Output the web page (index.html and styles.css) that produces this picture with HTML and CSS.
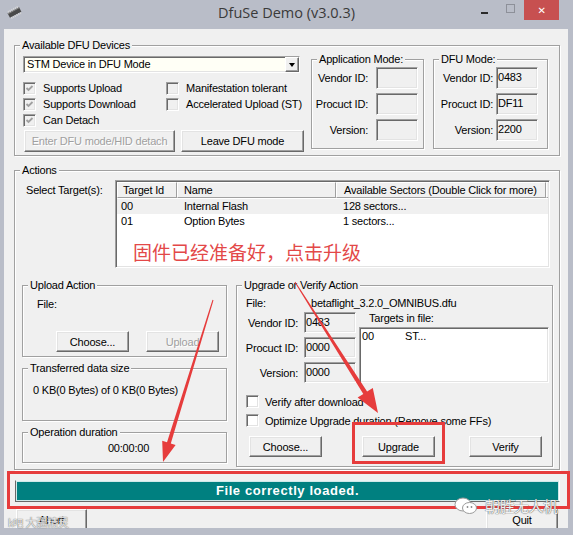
FILE: index.html
```html
<!DOCTYPE html>
<html>
<head>
<meta charset="utf-8">
<title>DfuSe Demo</title>
<link rel="stylesheet" href="styles.css">
</head>
<body>
<div class="window">
  <div class="titlebar">
    <div class="tb-left">
      <svg class="appicon" width="17" height="13" viewBox="0 0 17 13">
        <g transform="rotate(-28 8.5 6.5)">
          <rect x="2" y="4" width="13" height="5" fill="#4a4a4a"/>
          <rect x="2" y="4" width="13" height="1" fill="#8a8a8a"/>
          <g stroke="#d8d8d8" stroke-width="1">
            <line x1="3.5" y1="2" x2="3.5" y2="4"/><line x1="5.5" y1="2" x2="5.5" y2="4"/><line x1="7.5" y1="2" x2="7.5" y2="4"/><line x1="9.5" y1="2" x2="9.5" y2="4"/><line x1="11.5" y1="2" x2="11.5" y2="4"/><line x1="13.5" y1="2" x2="13.5" y2="4"/>
            <line x1="3.5" y1="9" x2="3.5" y2="11"/><line x1="5.5" y1="9" x2="5.5" y2="11"/><line x1="7.5" y1="9" x2="7.5" y2="11"/><line x1="9.5" y1="9" x2="9.5" y2="11"/><line x1="11.5" y1="9" x2="11.5" y2="11"/><line x1="13.5" y1="9" x2="13.5" y2="11"/>
          </g>
        </g>
      </svg>
    </div>
    <div class="title">DfuSe Demo (v3.0.3)</div>
    <div class="caps">
      <span class="cap-min"></span>
      <span class="cap-max"></span>
      <span class="cap-close">✕</span>
    </div>
  </div>

  <div class="client">
    <div class="group g-dev">
      <div class="gtitle">Available DFU Devices</div>
      <div class="dev-body">
        <div class="devleft">
          <div class="combo">
            <div class="combo-text">STM Device in DFU Mode</div>
            <div class="combo-btn"><span class="tri"></span></div>
          </div>
          <div class="checks">
            <div class="cb"><span class="box dis"><svg width="11" height="11" viewBox="0 0 11 11"><path d="M2.5 5 L4.5 7 L8.5 3" fill="none" stroke="#a0a0a0" stroke-width="1.8"/></svg></span>Supports Upload</div>
            <div class="cb"><span class="box dis"></span>Manifestation tolerant</div>
            <div class="cb"><span class="box dis"><svg width="11" height="11" viewBox="0 0 11 11"><path d="M2.5 5 L4.5 7 L8.5 3" fill="none" stroke="#a0a0a0" stroke-width="1.8"/></svg></span>Supports Download</div>
            <div class="cb"><span class="box dis"></span>Accelerated Upload (ST)</div>
            <div class="cb"><span class="box dis"><svg width="11" height="11" viewBox="0 0 11 11"><path d="M2.5 5 L4.5 7 L8.5 3" fill="none" stroke="#a0a0a0" stroke-width="1.8"/></svg></span>Can Detach</div>
          </div>
          <div class="devbtns">
            <div class="btn dis b-enter">Enter DFU mode/HID detach</div>
            <div class="btn b-leave">Leave DFU mode</div>
          </div>
        </div>

        <div class="group g-app">
          <div class="gtitle">Application Mode:</div>
          <div class="fields">
            <div class="frow"><span class="flabel">Vendor ID:</span><span class="inp"></span></div>
            <div class="frow"><span class="flabel">Procuct ID:</span><span class="inp"></span></div>
            <div class="frow"><span class="flabel">Version:</span><span class="inp"></span></div>
          </div>
        </div>

        <div class="group g-dfu">
          <div class="gtitle">DFU Mode:</div>
          <div class="fields">
            <div class="frow"><span class="flabel">Vendor ID:</span><span class="inp">0483</span></div>
            <div class="frow"><span class="flabel">Procuct ID:</span><span class="inp">DF11</span></div>
            <div class="frow"><span class="flabel">Version:</span><span class="inp">2200</span></div>
          </div>
        </div>
      </div>
    </div>

    <div class="group g-actions">
      <div class="gtitle">Actions</div>
      <div class="sel-row">
        <div class="sel-label">Select Target(s):</div>
        <div class="list targets">
          <div class="lhead">
            <div class="hc c1">Target Id</div>
            <div class="hc c2">Name</div>
            <div class="hc c3">Available Sectors (Double Click for more)</div>
            <div class="hc c4"></div>
          </div>
          <div class="lrow sel"><span class="c1">00</span><span class="c2">Internal Flash</span><span class="c3">128 sectors...</span></div>
          <div class="lrow"><span class="c1">01</span><span class="c2">Option Bytes</span><span class="c3">1 sectors...</span></div>
        </div>
      </div>

      <div class="act-bottom">
        <div class="act-left">
          <div class="group g-upload">
            <div class="gtitle">Upload Action</div>
            <div class="up-file">File:</div>
            <div class="up-btns">
              <div class="btn b-choose1">Choose...</div>
              <div class="btn dis b-upload">Upload</div>
            </div>
          </div>
          <div class="group g-trans">
            <div class="gtitle">Transferred data size</div>
            <div class="trans-text">0 KB(0 Bytes) of 0 KB(0 Bytes)</div>
          </div>
          <div class="group g-dur">
            <div class="gtitle">Operation duration</div>
            <div class="dur-text">00:00:00</div>
          </div>
        </div>

        <div class="group g-upgrade">
          <div class="gtitle">Upgrade or Verify Action</div>
          <div class="ug-file"><span class="ug-flabel">File:</span><span>betaflight_3.2.0_OMNIBUS.dfu</span></div>
          <div class="ug-mid">
            <div class="ug-fields">
              <div class="frow"><span class="flabel">Vendor ID:</span><span class="inp">0483</span></div>
              <div class="frow"><span class="flabel">Procuct ID:</span><span class="inp">0000</span></div>
              <div class="frow"><span class="flabel">Version:</span><span class="inp">0000</span></div>
            </div>
            <div class="ug-targets">
              <div class="tf-label">Targets in file:</div>
              <div class="list tf-list">
                <div class="tf-row"><span class="tf-c1">00</span><span>ST...</span></div>
              </div>
            </div>
          </div>
          <div class="ug-checks">
            <div class="cb"><span class="box"></span>Verify after download</div>
            <div class="cb"><span class="box"></span>Optimize Upgrade duration (Remove some FFs)</div>
          </div>
          <div class="ug-btns">
            <div class="btn b-choose2">Choose...</div>
            <div class="btn b-upgrade">Upgrade</div>
            <div class="btn b-verify">Verify</div>
          </div>
        </div>
      </div>
    </div>

    <div class="status"><div class="status-in">File correctly loaded.</div></div>

    <div class="btmrow">
      <div class="btn b-abort">Abort</div>
      <div class="btn b-quit">Quit</div>
    </div>
  </div>

  <div class="overlay">
    <svg class="marks" width="573" height="535" viewBox="0 0 573 535">
      <rect x="353.5" y="423.5" width="90" height="39" fill="none" stroke="#e63c3c" stroke-width="3"/>
      <rect x="8.5" y="472.5" width="560" height="35" fill="none" stroke="#e63c3c" stroke-width="3"/>
      <polygon points="213.5,300.2 170.8,443.5 175.6,445 163,462 162.2,440.8 167,442.3 212.5,299.8" fill="#e63c3c"/>
      <polygon points="295.4,281.7 367.1,391.5 372.8,387.9 378,413 357.6,397.5 363.3,393.9 294.6,282.3" fill="#e63c3c"/>
    </svg>
    <div class="note">固件已经准备好，点击升级</div>
    <div class="wm-right">
      <svg class="wechat" width="24" height="18" viewBox="0 0 24 18">
        <ellipse cx="9" cy="7.5" rx="8" ry="6.5" fill="#fff" stroke="#9a9a9a" stroke-width="1"/>
        <ellipse cx="15.5" cy="11" rx="7" ry="5.5" fill="#fff" stroke="#9a9a9a" stroke-width="1"/>
        <circle cx="13.5" cy="10" r="0.9" fill="#888"/><circle cx="17.5" cy="10" r="0.9" fill="#888"/>
      </svg>
      <span class="wm-text">朝胜无人机</span>
    </div>
    <div class="wm-left"><span class="wm-k">k吧</span> 大疆精灵</div>
  </div>
</div>
</body>
</html>
```

FILE: styles.css
```css
* { box-sizing: border-box; }
html, body { margin: 0; padding: 0; }
body {
  background: #b9bdc8;
  font-family: "Liberation Sans", Arial, sans-serif;
  font-size: 11px;
  letter-spacing: -0.2px;
  color: #000;
}
.window {
  position: relative;
  width: 573px;
  height: 535px;
  overflow: hidden;
  background: #b9bdc8;
}

/* title bar */
.titlebar {
  height: 29px;
  display: grid;
  grid-template-columns: 1fr auto 1fr;
  align-items: start;
}
.appicon { display: block; margin: 6px 0 0 6px; }
.title {
  font-family: "Open Sans", "Noto Sans", sans-serif;
  font-size: 14.5px;
  letter-spacing: 0;
  line-height: 20px;
  margin-top: 3px;
  color: #3a3a3a;
  white-space: nowrap;
}
.caps {
  display: flex;
  justify-content: flex-end;
  align-items: flex-start;
  padding-right: 14px;
}
.cap-min { width: 7px; height: 2px; background: #2a2a2a; margin-top: 12px; }
.cap-max { width: 9px; height: 9px; border: 1px solid #8d9099; margin: 4px 0 0 18px; }
.cap-close {
  width: 35px; height: 20px; margin-left: 9px;
  background: #c75050; color: #fff;
  display: flex; align-items: center; justify-content: center;
  font-family: "DejaVu Sans", sans-serif; font-size: 10px; font-weight: bold;
}

/* client area */
.client {
  margin-left: 4px;
  width: 564px;
  height: 499px;
  background: #f0f0f0;
  overflow: hidden;
  padding-top: 16px;
}

/* group boxes */
.group {
  border: 1px solid #a0a0a0;
  box-shadow: inset 1px 1px #fff, 1px 1px #fff;
}
.gtitle {
  width: max-content;
  height: 13px;
  line-height: 13px;
  margin: -7px 0 0 5px;
  padding: 0 2px;
  background: #f0f0f0;
  white-space: nowrap;
}

/* 3d controls */
.btn {
  height: 22px;
  background: #f0f0f0;
  border: 1px solid;
  border-color: #fff #696969 #696969 #fff;
  box-shadow: inset -1px -1px #a0a0a0, inset 1px 1px #e3e3e3;
  display: flex; align-items: center; justify-content: center;
  white-space: nowrap;
}
.btn.dis { color: #a0a0a0; text-shadow: 1px 1px #fff; }
.inp, .list, .combo, .box {
  border: 1px solid;
  border-color: #a0a0a0 #fff #fff #a0a0a0;
  box-shadow: inset 1px 1px #696969, inset -1px -1px #e3e3e3;
}
.inp {
  display: block;
  width: 42px; height: 22px;
  background: #f0f0f0;
  padding: 3px 0 0 1px;
  line-height: 13px;
}
.list { background: #fff; padding: 1px; }

/* checkboxes */
.cb { display: flex; align-items: center; height: 16px; white-space: nowrap; }
.box {
  width: 13px; height: 13px;
  background: #fff;
  margin-right: 7px;
  flex: none;
}
.box svg { display: block; }
.box.dis { background: #f0f0f0; }

/* device group */
.g-dev { margin-left: 10px; width: 546px; height: 111px; }
.dev-body { display: flex; padding-left: 8px; }
.devleft { width: 281px; }
.combo {
  margin-top: 4px;
  width: 277px; height: 17px;
  display: flex;
  background: #fffff6;
}
.combo-text { flex: 1; padding: 1px 0 0 3px; line-height: 13px; white-space: nowrap; }
.combo-btn {
  width: 14px; height: 15px;
  background: #f0f0f0;
  border: 1px solid;
  border-color: #fff #696969 #696969 #fff;
  box-shadow: inset -1px -1px #a0a0a0;
  display: flex; align-items: center; justify-content: center;
}
.tri {
  width: 0; height: 0;
  border-left: 3.5px solid transparent;
  border-right: 3.5px solid transparent;
  border-top: 4px solid #000;
}
.checks {
  margin-top: 7px;
  display: grid;
  grid-template-columns: 143px auto;
}
.devbtns { display: flex; margin-top: 2px; }
.b-enter { width: 151px; margin-left: 1px; }
.b-leave { width: 123px; margin-left: 6px; }

.g-app { margin: 7px 0 0 7px; width: 113px; height: 90px; }
.g-dfu { margin: 7px 0 0 9px; width: 115px; height: 90px; }
.fields { margin-top: 1px; padding-left: 3px; display: flex; flex-direction: column; gap: 4px; }
.frow { display: flex; align-items: center; height: 22px; }
.flabel { text-align: right; white-space: nowrap; }
.g-app .flabel { width: 53px; margin-right: 8px; }
.g-dfu .flabel { width: 56px; margin-right: 3px; }

/* actions group */
.g-actions { margin: 14px 0 0 10px; width: 546px; height: 300px; }
.sel-row { display: flex; margin-top: 3px; }
.sel-label { width: 100px; padding: 4px 0 0 11px; line-height: 13px; white-space: nowrap; }
.targets { width: 435px; height: 88px; }
.lhead { display: flex; height: 16px; }
.hc {
  height: 16px;
  line-height: 14px;
  background: #f0f0f0;
  border: 1px solid;
  border-color: #fff #a0a0a0 #a0a0a0 #fff;
  white-space: nowrap;
}
.lhead .c1 { width: 60px; padding-left: 5px; }
.lhead .c2 { width: 159px; padding-left: 6px; }
.lhead .c3 { width: 210px; padding-left: 7px; }
.lhead .c4 { flex: 1; border-right: none; }
.lrow { display: flex; height: 15px; line-height: 15px; white-space: nowrap; }
.lrow.sel { background: #f0f0f0; margin-top: 1px; }
.lrow .c1 { width: 60px; padding-left: 4px; }
.lrow .c2 { width: 159px; padding-left: 7px; }
.lrow .c3 { padding-left: 7px; }

.act-bottom { display: flex; margin-top: 17px; padding-left: 7px; }
.act-left { width: 205px; }
.g-upload { height: 72px; }
.up-file { margin-top: 6px; padding-left: 14px; line-height: 13px; }
.up-btns { display: flex; margin-top: 20px; }
.up-btns .btn { width: 73px; height: 21px; }
.b-choose1 { margin-left: 33px; }
.b-upload { margin-left: 17px; }
.g-trans { margin-top: 11px; height: 53px; }
.trans-text { margin-top: 9px; padding-left: 10px; line-height: 13px; white-space: nowrap; }
.g-dur { margin-top: 11px; height: 31px; }
.dur-text { margin-top: 3px; padding-left: 8px; text-align: center; line-height: 13px; }

.g-upgrade { margin-left: 9px; width: 317px; height: 182px; }
.ug-file { display: flex; margin-top: 5px; padding-left: 9px; line-height: 13px; white-space: nowrap; }
.ug-flabel { width: 65px; }
.ug-mid { display: flex; margin-top: 2px; }
.ug-fields { display: flex; flex-direction: column; gap: 4px; }
.ug-fields .frow { height: 21px; }
.ug-fields .flabel { width: 61px; margin-right: 6px; }
.ug-fields .inp { width: 52px; height: 21px; }
.ug-targets { margin-left: 3px; }
.tf-label { padding-left: 10px; line-height: 13px; }
.tf-list { margin-top: 2px; width: 190px; height: 56px; }
.tf-row { display: flex; margin-top: 1px; padding-left: 1px; line-height: 13px; }
.tf-c1 { width: 43px; }
.ug-checks { margin-top: 9px; padding-left: 9px; }
.ug-checks .cb { height: 19px; }
.ug-checks .box { margin-right: 6px; }
.ug-btns { display: flex; margin-top: 6px; }
.ug-btns .btn { width: 73px; height: 21px; }
.b-choose2 { margin-left: 12px; }
.b-upgrade { margin-left: 40px; }
.b-verify { margin-left: 34px; }

/* status bar */
.status {
  margin: 10px 0 0 11px;
  width: 545px; height: 22px;
  border: 1px solid;
  border-color: #e8f4f4 #ffffff #696969 #696969;
  background: #cfe9e9;
  padding: 1px;
}
.status-in {
  height: 18px;
  background: #008080;
  color: #fff;
  font-weight: bold;
  font-size: 13px;
  letter-spacing: 0.6px;
  line-height: 18px;
  text-align: center;
}

.btmrow { display: flex; justify-content: space-between; margin-top: 7px; padding: 0 10px 0 12px; }
.b-abort { width: 71px; }
.b-quit { width: 72px; }

/* annotation overlay */
.overlay {
  position: absolute; left: 0; top: 0;
  width: 573px; height: 535px;
  pointer-events: none;
}
.marks { position: absolute; left: 0; top: 0; }
.note {
  position: absolute; left: 133px; top: 241px;
  font-family: "Noto Sans CJK SC", sans-serif;
  font-size: 19px; line-height: 22px;
  letter-spacing: 0;
  color: #e34848;
  white-space: nowrap;
}
.wm-right {
  position: absolute; left: 454px; top: 497px;
  display: flex; align-items: center; gap: 7px;
}
.wechat { display: block; }
.wm-text {
  font-family: "Noto Sans CJK SC", sans-serif;
  font-size: 15px; line-height: 18px;
  color: rgba(255,255,255,0.92);
  text-shadow: 0 0 1px #666, 0 0 1px #666;
  letter-spacing: -0.5px;
}
.wm-left {
  position: absolute; left: 8px; top: 515px;
  font-family: "Noto Sans CJK SC", sans-serif;
  font-size: 11px; line-height: 14px;
  color: rgba(255,255,255,0.85);
  text-shadow: 0 0 1px #777, 0 0 1px #777;
  white-space: nowrap;
}
.wm-k { font-size: 10px; }
```
